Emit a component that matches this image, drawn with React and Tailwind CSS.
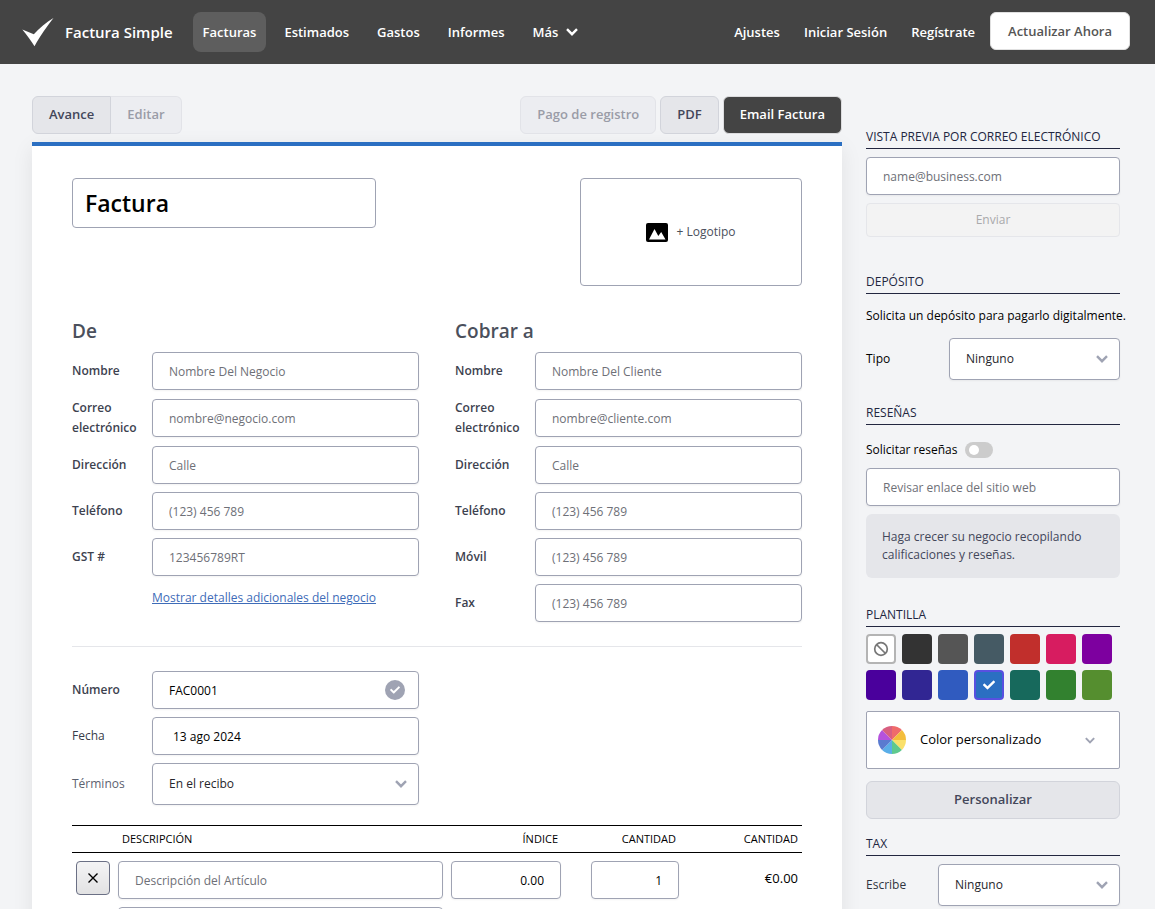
import { useState } from "react";

const FIELD =
  "h-[38px] w-full min-w-0 rounded border border-[#9fa3b3] bg-white px-4 text-[12px] text-black shadow-xs placeholder:text-[#6e7077] outline-none focus:border-[#2b6fc2]";

function Chevron({ className }) {
  return (
    <svg viewBox="0 0 12 8" fill="none" stroke="currentColor" strokeWidth="2.400" className={className} aria-hidden="true">
      <path d="M1 1.200 6 6.200 11 1.200" />
    </svg>
  );
}

function CheckMark({ className }) {
  return (
    <svg viewBox="0 0 512 512" fill="currentColor" className={className} aria-hidden="true">
      <path d="M173.900 439.400 7.500 273c-10-10-10-26.200 0-36.200l36.200-36.200c10-10 26.200-10 36.200 0L192 312.700 432.100 72.600c10-10 26.200-10 36.200 0l36.200 36.200c10 10 10 26.200 0 36.200L210.100 439.400c-10 10-26.200 10-36.200 0z" />
    </svg>
  );
}

function Select({ id, value, className }) {
  return (
    <div className={`relative ${className}`}>
      <select
        id={id}
        className="h-[42px] w-full appearance-none rounded border border-[#9fa3b3] bg-white px-4 text-[12px] text-[#26262c] shadow-xs outline-none"
      >
        <option>{value}</option>
      </select>
      <Chevron className="pointer-events-none absolute top-[17px] right-3 h-2 w-3 text-[#9fa3b3]" />
    </div>
  );
}

function Row({ id, label, weight = "font-semibold text-[#3d424f]", children }) {
  return (
    <div className="flex items-center">
      <label htmlFor={id} className={`w-20 shrink-0 text-[12px] leading-5 ${weight}`}>
        {label}
      </label>
      <div className="relative min-w-0 flex-1">{children}</div>
    </div>
  );
}

function Party({ title, prefix, fields, children }) {
  return (
    <section className="flex min-w-0 flex-1 flex-col gap-2">
      <h2 className="text-[19px] leading-[26px] font-semibold text-[#4b505c]">{title}</h2>
      {fields.map(([label, hint]) => (
        <Row key={label} id={`${prefix}-${label}`} label={label}>
          <input id={`${prefix}-${label}`} type="text" placeholder={hint} className={`block ${FIELD}`} />
        </Row>
      ))}
      {children}
    </section>
  );
}

const FROM = [
  ["Nombre", "Nombre Del Negocio"],
  ["Correo electrónico", "nombre@negocio.com"],
  ["Dirección", "Calle"],
  ["Teléfono", "(123) 456 789"],
  ["GST #", "123456789RT"],
];
const TO = [
  ["Nombre", "Nombre Del Cliente"],
  ["Correo electrónico", "nombre@cliente.com"],
  ["Dirección", "Calle"],
  ["Teléfono", "(123) 456 789"],
  ["Móvil", "(123) 456 789"],
  ["Fax", "(123) 456 789"],
];

const SWATCHES = [
  "#333333", "#555555", "#455a64", "#c12f2c", "#d71c60", "#7d009f",
  "#4a009c", "#312693", "#305bbf", "#2b6fc2", "#17695c", "#32812f", "#558e2f",
];

const WHEEL = ["#ef6b6b", "#f3bd3c", "#fae06a", "#5fc98e", "#5aaee8", "#5a7bd0", "#b552dc", "#d85f80"];

function ColorWheel() {
  const point = (turn) => {
    const a = (turn * Math.PI) / 4 - Math.PI / 2;
    return `${(14 + 14 * Math.cos(a)).toFixed(2)} ${(14 + 14 * Math.sin(a)).toFixed(2)}`;
  };
  return (
    <svg viewBox="0 0 28 28" className="size-7 shrink-0" aria-hidden="true">
      {WHEEL.map((color, i) => (
        <path key={color} fill={color} d={`M14 14 L${point(i)} A14 14 0 0 1 ${point(i + 1)} Z`} />
      ))}
    </svg>
  );
}

function SideTitle({ children }) {
  return (
    <h3 className="border-b border-[#22263f] text-[12px] leading-[23px] text-[#22263f] uppercase">{children}</h3>
  );
}

function Header() {
  const item = "rounded-lg px-2.5 leading-10";
  return (
    <header className="flex h-16 shrink-0 items-center bg-[#444444] pr-[25px] pl-[22px] text-[13px] font-semibold whitespace-nowrap text-white">
      <a href="#inicio" className="flex items-center gap-[11px] text-[15px]">
        <svg viewBox="0 0 32 30" className="h-[30px] w-8" fill="currentColor" aria-hidden="true">
          <path d="M.3 12.500 11.800 17.300C17.500 11.300 24 5.500 31.500 1 25.500 8.500 17.800 19.500 12.500 29.200 9 23.500 4.600 17.800.3 12.500Z" />
        </svg>
        Factura Simple
      </a>
      <nav className="ml-5 flex gap-2">
        <a href="#facturas" className={`${item} bg-[#5e5e5e]`}>Facturas</a>
        <a href="#estimados" className={item}>Estimados</a>
        <a href="#gastos" className={item}>Gastos</a>
        <a href="#informes" className={item}>Informes</a>
        <button type="button" className={`${item} flex items-center gap-2`}>
          Más
          <Chevron className="h-2 w-3" />
        </button>
      </nav>
      <nav className="ml-auto flex items-center">
        <a href="#ajustes" className="px-3 leading-10">Ajustes</a>
        <a href="#sesion" className="px-3 leading-10">Iniciar Sesión</a>
        <a href="#registro" className="px-3 leading-10">Regístrate</a>
        <a
          href="#actualizar"
          className="mb-0.5 ml-[3px] rounded-md border border-[#e0e0e0] bg-white px-[17px] leading-9 text-[#555555]"
        >
          Actualizar Ahora
        </a>
      </nav>
    </header>
  );
}

function Toolbar() {
  const base = "h-[38px] border px-4 text-[13px] font-semibold";
  const idle = "border-[#e2e3e8] bg-[#ecedf1] text-[#9a9ca7]";
  const active = "border-[#d2d4db] bg-[#e5e6ea] text-[#43475a]";
  return (
    <div className="flex justify-between whitespace-nowrap">
      <div className="flex">
        <button type="button" className={`${base} ${active} rounded-l-md`}>Avance</button>
        <button type="button" disabled className={`${base} ${idle} rounded-r-md border-l-0`}>Editar</button>
      </div>
      <div className="flex gap-1">
        <button type="button" disabled className={`${base} ${idle} rounded-md`}>Pago de registro</button>
        <button type="button" className={`${base} ${active} rounded-md`}>PDF</button>
        <button type="button" className={`${base} rounded-md border-[#dcdcde] bg-[#444444] text-white`}>
          Email Factura
        </button>
      </div>
    </div>
  );
}

function Items() {
  return (
    <table className="mt-5 w-full table-fixed border-collapse text-[12px] text-black">
      <colgroup>
        <col className="w-[42px]" />
        <col />
        <col className="w-[115px]" />
        <col className="w-[118px]" />
        <col className="w-[122px]" />
      </colgroup>
      <thead>
        <tr className="h-[27px] border-y border-black text-[11px]">
          <td />
          <th className="pl-2 text-left font-normal">DESCRIPCIÓN</th>
          <th className="pr-1 text-right font-normal">ÍNDICE</th>
          <th className="pr-1 text-right font-normal">CANTIDAD</th>
          <th className="pr-1 text-right font-normal">CANTIDAD</th>
        </tr>
      </thead>
      <tbody>
        <tr className="align-top">
          <td className="pt-2 pl-1">
            <button
              type="button"
              aria-label="Eliminar"
              className="flex size-[34px] items-center justify-center rounded border border-[#6b7085] bg-linear-to-b from-[#f4f4f5] to-[#e2e2e3]"
            >
              <svg viewBox="0 0 10 10" className="size-2.5" fill="none" stroke="black" strokeWidth="1.400" aria-hidden="true">
                <path d="M.5.5l9 9M9.500.5l-9 9" />
              </svg>
            </button>
          </td>
          <td className="px-1 pt-2">
            <input type="text" aria-label="Descripción" placeholder="Descripción del Artículo" className={`block ${FIELD}`} />
            <textarea
              aria-label="Detalles adicionales"
              placeholder="Detalles adicionales"
              className="mt-2 block h-20 w-full resize-none rounded border border-[#9fa3b3] px-4 py-2 text-[12px]"
            />
          </td>
          <td className="pt-2 pr-px pl-1">
            <input type="text" aria-label="Índice" defaultValue="0.00" className={`block text-right ${FIELD}`} />
          </td>
          <td className="pt-2 pr-px pl-[29px]">
            <input type="text" aria-label="Cantidad" defaultValue="1" className={`block text-right ${FIELD}`} />
          </td>
          <td className="pt-4 pr-1 text-right text-[13px] leading-[18px]">€0.00</td>
        </tr>
      </tbody>
    </table>
  );
}

function Invoice() {
  return (
    <div className="mt-2 border-t-4 border-[#2b6fc2] bg-white px-10 pt-8 pb-10 shadow-[0_6px_20px_rgba(0,0,0,0.08)]">
      <div className="flex items-start justify-between">
        <input
          type="text"
          aria-label="Título"
          defaultValue="Factura"
          className="h-[50px] w-[304px] rounded border border-[#9fa3b3] px-3 text-[23px] font-semibold text-black outline-none"
        />
        <button
          type="button"
          className="flex h-[108px] w-[222px] items-center justify-center gap-2 rounded border border-[#9fa3b3] text-[12px] text-[#4b505c]"
        >
          <svg viewBox="0 0 22 19" className="h-[19px] w-[22px]" aria-hidden="true">
            <rect width="22" height="19" rx="2" fill="black" />
            <path d="M3 16.500 8.500 6l3.800 7L15.200 9l4.300 7.500Z" fill="white" />
          </svg>
          + Logotipo
        </button>
      </div>

      <div className="mt-8 flex gap-9">
        <Party title="De" prefix="de" fields={FROM}>
          <a href="#detalles" className="mt-1 ml-20 text-[12px] leading-5 text-[#3e6cb8] underline">
            Mostrar detalles adicionales del negocio
          </a>
        </Party>
        <Party title="Cobrar a" prefix="cobrar" fields={TO} />
      </div>

      <hr className="mt-6 border-[#e5e6ea]" />

      <div className="mt-6 flex gap-9">
        <div className="flex flex-1 flex-col gap-2">
          <Row id="numero" label="Número">
            <input id="numero" type="text" defaultValue="FAC0001" className={`block ${FIELD}`} />
            <span className="absolute top-[9px] right-3.5 flex size-5 items-center justify-center rounded-full bg-[#9fa3b3] text-white">
              <CheckMark className="size-2.5" />
            </span>
          </Row>
          <Row id="fecha" label="Fecha" weight="font-medium text-[#373c49]">
            <input id="fecha" type="text" defaultValue="13 ago 2024" className={`block ${FIELD} pl-5`} />
          </Row>
          <Row id="terminos" label="Términos" weight="text-[#5d6270]">
            <Select id="terminos" value="En el recibo" className="w-full" />
          </Row>
        </div>
        <div className="flex-1" />
      </div>

      <Items />
    </div>
  );
}

function Sidebar() {
  const [picked, setPicked] = useState("#2b6fc2");
  return (
    <aside className="flex w-[254px] shrink-0 flex-col pt-[29px] text-[12px] text-black">
      <SideTitle>Vista previa por correo electrónico</SideTitle>
      <input type="email" aria-label="Correo electrónico" placeholder="name@business.com" className={`mt-2 ${FIELD}`} />
      <button
        type="button"
        disabled
        className="mt-2 h-[34px] rounded border border-[#e5e6ea] bg-[#f3f3f3] text-[12px] text-[#a9a9ab]"
      >
        Enviar
      </button>

      <div className="mt-[33px] flex flex-col">
        <SideTitle>Depósito</SideTitle>
        <p className="mt-3 leading-5 whitespace-nowrap">Solicita un depósito para pagarlo digitalmente.</p>
        <div className="mt-3 flex items-center justify-between">
          <label htmlFor="tipo">Tipo</label>
          <Select id="tipo" value="Ninguno" className="w-[171px]" />
        </div>
      </div>

      <div className="mt-[21px] flex flex-col">
        <SideTitle>Reseñas</SideTitle>
        <div className="mt-4 flex items-center gap-2">
          <label htmlFor="resenas" className="leading-[18px]">Solicitar reseñas</label>
          <input
            id="resenas"
            type="checkbox"
            className="flex h-4 w-7 appearance-none items-center rounded-full bg-[#cccccc] px-1 before:size-2.5 before:rounded-full before:bg-white checked:justify-end checked:bg-[#2b6fc2]"
          />
        </div>
        <input type="text" aria-label="Enlace de reseñas" placeholder="Revisar enlace del sitio web" className={`mt-[9px] ${FIELD}`} />
        <p className="mt-2 rounded-md bg-[#e5e6ea] px-4 py-3.5 leading-[18px] text-[#43475a]">
          Haga crecer su negocio recopilando calificaciones y reseñas.
        </p>
      </div>

      <div className="mt-[25px] flex flex-col">
        <SideTitle>Plantilla</SideTitle>
        <div className="mt-[7px] flex flex-wrap gap-1.5">
          <button
            type="button"
            aria-label="Sin color"
            className="flex size-[30px] items-center justify-center rounded border-2 border-[#b4b4b4] bg-white"
          >
            <svg viewBox="0 0 16 16" className="size-4" fill="none" stroke="#777777" strokeWidth="1.700" aria-hidden="true">
              <circle cx="8" cy="8" r="6.300" />
              <path d="M3.500 3.500l9 9" />
            </svg>
          </button>
          {SWATCHES.map((color) => (
            <button
              key={color}
              type="button"
              aria-label={color}
              onClick={() => setPicked(color)}
              style={{ backgroundColor: color }}
              className={`flex size-[30px] items-center justify-center rounded text-white ${
                color === picked ? "border-2 border-[#5850e0]" : ""
              }`}
            >
              {color === picked && <CheckMark className="size-3" />}
            </button>
          ))}
        </div>
        <button
          type="button"
          className="mt-[11px] flex h-[58px] items-center rounded-xs border border-[#9fa3b3] bg-white pr-6 pl-[11px] text-[13px]"
        >
          <ColorWheel />
          <span className="ml-3.5">Color personalizado</span>
          <Chevron className="ml-auto h-[7px] w-2.5 text-[#9fa3b3]" />
        </button>
        <button
          type="button"
          className="mt-3 h-[38px] rounded-md border border-[#d2d4db] bg-[#e5e6ea] text-[13px] font-semibold text-[#43475a]"
        >
          Personalizar
        </button>
      </div>

      <div className="mt-[13px] flex flex-col">
        <SideTitle>Tax</SideTitle>
        <div className="mt-2 flex items-center justify-between">
          <label htmlFor="escribe" className="font-medium text-[#30343f]">Escribe</label>
          <Select id="escribe" value="Ninguno" className="w-[182px]" />
        </div>
      </div>
    </aside>
  );
}

export default function App() {
  return (
    <div className="flex h-screen flex-col overflow-hidden bg-[#f3f4f6] font-['Open_Sans','Noto_Sans',sans-serif]">
      <Header />
      <main className="flex min-h-0 flex-1 items-start gap-6 overflow-hidden pt-8 pr-[35px] pl-8">
        <div className="min-w-0 flex-1">
          <Toolbar />
          <Invoice />
        </div>
        <Sidebar />
      </main>
    </div>
  );
}
